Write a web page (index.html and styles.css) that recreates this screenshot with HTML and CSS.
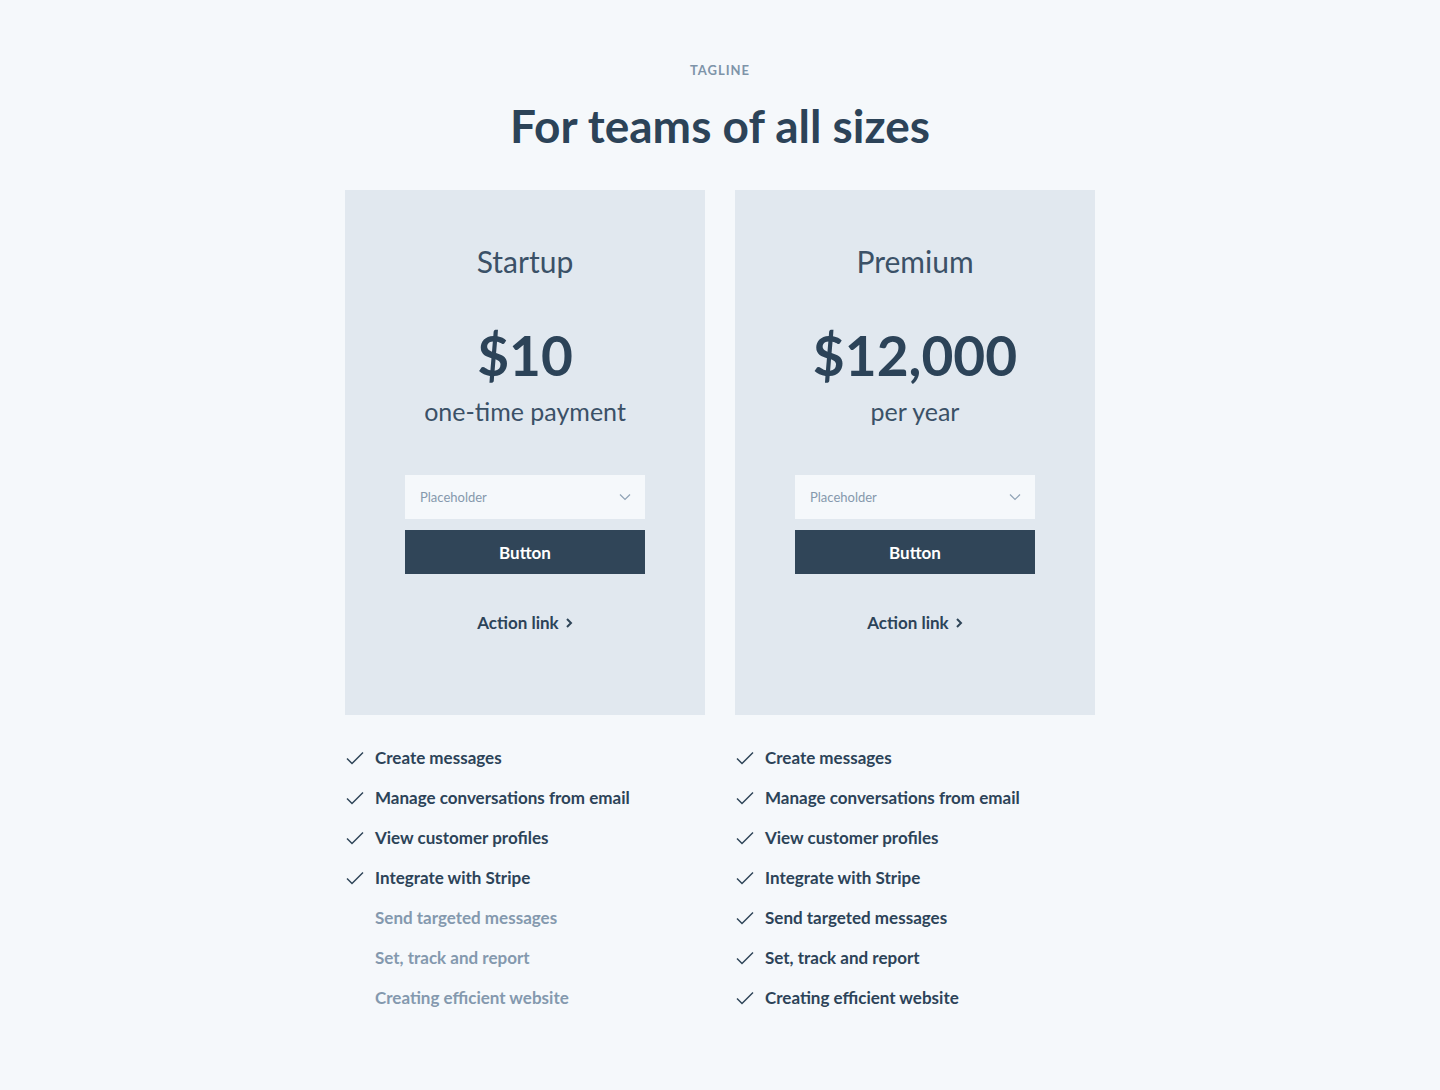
FILE: index.html
```html
<!DOCTYPE html>
<html lang="en">
<head>
<meta charset="utf-8">
<title>Pricing</title>
<link rel="stylesheet" href="styles.css">
</head>
<body>
<main class="pricing">
  <p class="tagline">TAGLINE</p>
  <h1 class="title">For teams of all sizes</h1>
  <div class="plans">
    <section class="plan">
      <div class="card">
        <h2 class="plan-name">Startup</h2>
        <div class="price">$10</div>
        <div class="period">one-time payment</div>
        <div class="select">
          <span>Placeholder</span>
          <svg class="chev" width="12" height="8" viewBox="0 0 12 8"><path d="M1 1.5l5 5 5-5" fill="none" stroke="#8fa2b5" stroke-width="1.2"/></svg>
        </div>
        <button class="btn">Button</button>
        <a class="action" href="#">Action link <svg width="8" height="12" viewBox="0 0 8 12"><path d="M2 2l4 4-4 4" fill="none" stroke="#2f4558" stroke-width="2"/></svg></a>
      </div>
      <ul class="features">
        <li><svg class="check" viewBox="0 0 18 14"><path d="M1 7.5l5 5L17 1.5" fill="none" stroke="#2f4558" stroke-width="1.5"/></svg>Create messages</li>
        <li><svg class="check" viewBox="0 0 18 14"><path d="M1 7.5l5 5L17 1.5" fill="none" stroke="#2f4558" stroke-width="1.5"/></svg>Manage conversations from email</li>
        <li><svg class="check" viewBox="0 0 18 14"><path d="M1 7.5l5 5L17 1.5" fill="none" stroke="#2f4558" stroke-width="1.5"/></svg>View customer profiles</li>
        <li><svg class="check" viewBox="0 0 18 14"><path d="M1 7.5l5 5L17 1.5" fill="none" stroke="#2f4558" stroke-width="1.5"/></svg>Integrate with Stripe</li>
        <li class="off">Send targeted messages</li>
        <li class="off">Set, track and report</li>
        <li class="off">Creating efficient website</li>
      </ul>
    </section>
    <section class="plan">
      <div class="card">
        <h2 class="plan-name">Premium</h2>
        <div class="price">$12,000</div>
        <div class="period">per year</div>
        <div class="select">
          <span>Placeholder</span>
          <svg class="chev" width="12" height="8" viewBox="0 0 12 8"><path d="M1 1.5l5 5 5-5" fill="none" stroke="#8fa2b5" stroke-width="1.2"/></svg>
        </div>
        <button class="btn">Button</button>
        <a class="action" href="#">Action link <svg width="8" height="12" viewBox="0 0 8 12"><path d="M2 2l4 4-4 4" fill="none" stroke="#2f4558" stroke-width="2"/></svg></a>
      </div>
      <ul class="features">
        <li><svg class="check" viewBox="0 0 18 14"><path d="M1 7.5l5 5L17 1.5" fill="none" stroke="#2f4558" stroke-width="1.5"/></svg>Create messages</li>
        <li><svg class="check" viewBox="0 0 18 14"><path d="M1 7.5l5 5L17 1.5" fill="none" stroke="#2f4558" stroke-width="1.5"/></svg>Manage conversations from email</li>
        <li><svg class="check" viewBox="0 0 18 14"><path d="M1 7.5l5 5L17 1.5" fill="none" stroke="#2f4558" stroke-width="1.5"/></svg>View customer profiles</li>
        <li><svg class="check" viewBox="0 0 18 14"><path d="M1 7.5l5 5L17 1.5" fill="none" stroke="#2f4558" stroke-width="1.5"/></svg>Integrate with Stripe</li>
        <li><svg class="check" viewBox="0 0 18 14"><path d="M1 7.5l5 5L17 1.5" fill="none" stroke="#2f4558" stroke-width="1.5"/></svg>Send targeted messages</li>
        <li><svg class="check" viewBox="0 0 18 14"><path d="M1 7.5l5 5L17 1.5" fill="none" stroke="#2f4558" stroke-width="1.5"/></svg>Set, track and report</li>
        <li><svg class="check" viewBox="0 0 18 14"><path d="M1 7.5l5 5L17 1.5" fill="none" stroke="#2f4558" stroke-width="1.5"/></svg>Creating efficient website</li>
      </ul>
    </section>
  </div>
</main>
</body>
</html>
```

FILE: styles.css
```css
* { box-sizing: border-box; }
html, body {
  margin: 0;
  padding: 0;
  background: #f5f8fb;
  font-family: Lato, "Open Sans", sans-serif;
  color: #2f4558;
}
.pricing {
  min-height: 1090px;
  padding-top: 62px;
  display: flex;
  flex-direction: column;
  align-items: center;
}
.tagline {
  margin: 0;
  font-size: 13px;
  line-height: 16px;
  font-weight: 700;
  letter-spacing: 1px;
  color: #7e94a9;
}
.title {
  margin: 20px 0 0;
  font-size: 46px;
  line-height: 56px;
  font-weight: 700;
  color: #2c4358;
}
.plans {
  margin-top: 36px;
  display: flex;
  gap: 30px;
}
.plan {
  width: 360px;
}
.card {
  height: 525px;
  background: #e1e8ef;
  padding-top: 53px;
  display: flex;
  flex-direction: column;
  align-items: center;
}
.plan-name {
  margin: 0;
  font-size: 30px;
  line-height: 36px;
  font-weight: 400;
  color: #3b5167;
}
.price {
  margin-top: 43px;
  font-size: 55px;
  line-height: 66px;
  font-weight: 700;
  color: #2c4358;
}
.period {
  margin-top: 8px;
  font-size: 25px;
  line-height: 30px;
  color: #3b5167;
}
.select {
  margin-top: 49px;
  width: 240px;
  height: 44px;
  background: #f5f8fb;
  display: flex;
  align-items: center;
  justify-content: space-between;
  padding: 0 14px 0 15px;
  font-size: 13px;
  color: #8699ad;
}
.chev { width: 12px; height: 8px; }
.btn {
  margin-top: 11px;
  width: 240px;
  height: 44px;
  border: 0;
  background: #304558;
  color: #ffffff;
  font-family: inherit;
  font-size: 17px;
  font-weight: 700;
}
.action {
  margin-top: 38px;
  display: flex;
  align-items: center;
  gap: 6px;
  font-size: 17px;
  line-height: 22px;
  font-weight: 700;
  color: #2c4358;
  text-decoration: none;
}
.action svg { width: 8px; height: 12px; }
.features {
  list-style: none;
  margin: 31px 0 0;
  padding: 0;
  display: flex;
  flex-direction: column;
  gap: 16px;
}
.features li {
  display: flex;
  align-items: center;
  padding-left: 30px;
  position: relative;
  font-size: 17px;
  line-height: 24px;
  font-weight: 700;
  color: #2c4358;
}
.features li .check {
  position: absolute;
  left: 1px;
  top: 5px;
  width: 18px;
  height: 14px;
}
.features li.off { color: #8499ae; }
```
